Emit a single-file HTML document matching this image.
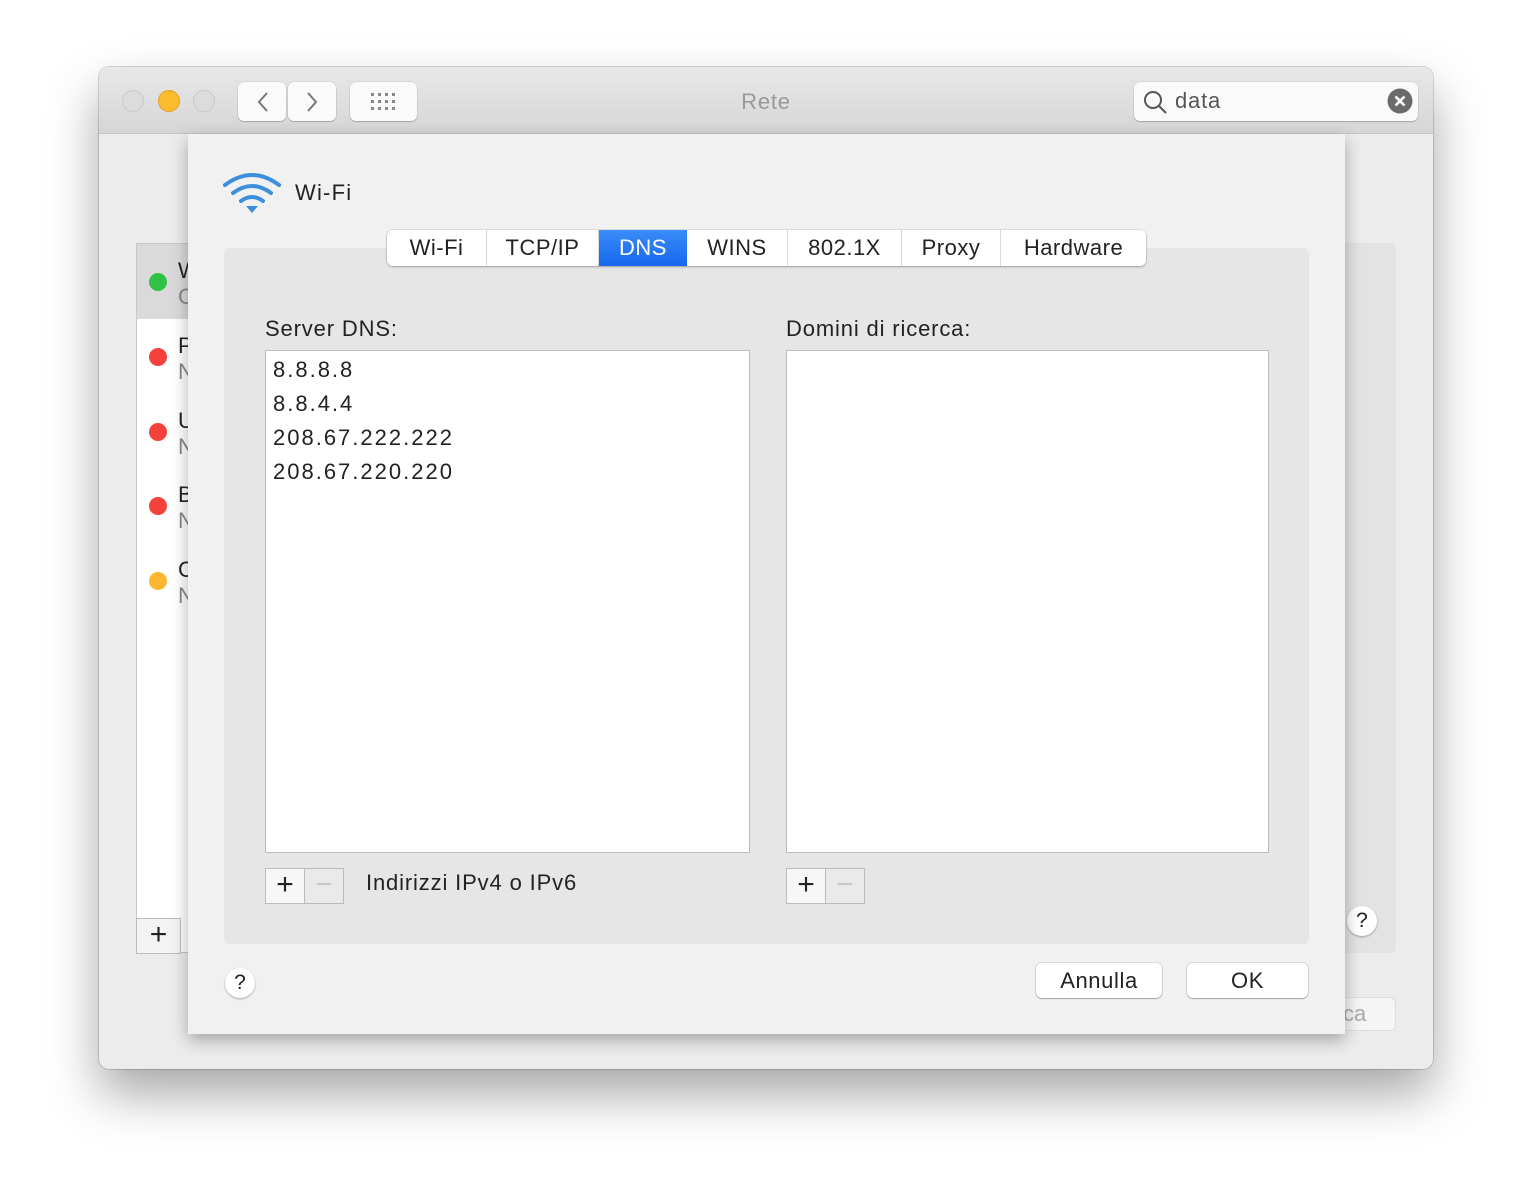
<!DOCTYPE html>
<html><head><meta charset="utf-8"><style>
*{margin:0;padding:0;box-sizing:border-box}
body{width:1532px;height:1200px;background:#fff;position:relative;overflow:hidden;font-family:"Liberation Sans",sans-serif;color:#222}
.a{position:absolute}
.win{left:99px;top:67px;width:1334px;height:1002px;border-radius:10px;background:#ececec;box-shadow:0 25px 50px rgba(0,0,0,.35),0 0 0 1px rgba(0,0,0,.15);overflow:hidden}
.tb{left:0;top:0;width:1334px;height:67px;background:linear-gradient(#e8e8e8,#d6d6d6);border-bottom:1px solid #c4c4c4}
.dot{width:22px;height:22px;border-radius:50%}
.btn{background:#fafafa;border-radius:6px;box-shadow:0 1px 1px rgba(0,0,0,.2),0 0 0 .5px rgba(0,0,0,.1)}
.sheet{left:188px;top:134px;width:1157px;height:900px;background:#f1f1f1;box-shadow:0 6px 16px rgba(0,0,0,.3)}
.box{background:#e6e6e6;border-radius:6px}
.tab{top:230px;height:36px;font-size:22px;line-height:36px;text-align:center;background:#fff;border-right:1px solid #d8d8d8;letter-spacing:.5px}
.list{background:#fff;border:1px solid #bdbdbd}
.lbl{font-size:22px;letter-spacing:.85px}
.pm{width:40px;height:36px;border:1px solid #bcbcbc;font-size:30px;line-height:32px;text-align:center;font-weight:300}
.hb{width:30px;height:30px;border-radius:50%;background:#fff;box-shadow:0 1px 2px rgba(0,0,0,.3);font-size:21px;text-align:center;line-height:30px}
.pb{border-radius:6px;background:#fff;box-shadow:0 1px 1px rgba(0,0,0,.25),0 0 0 1px rgba(0,0,0,.1);font-size:22px;text-align:center;line-height:35px;height:35px;letter-spacing:.6px}
</style></head><body>
<div class="a win">
 <div class="a tb"></div>
</div>
<div class="a dot" style="left:122px;top:90px;background:#dcdcdc;border:1px solid #c8c8c8"></div>
<div class="a dot" style="left:158px;top:90px;background:#fcbc2e;border:1px solid #e0a020"></div>
<div class="a dot" style="left:193px;top:90px;background:#dcdcdc;border:1px solid #c8c8c8"></div>
<div class="a btn" style="left:238px;top:82px;width:48px;height:39px"></div>
<div class="a btn" style="left:288px;top:82px;width:48px;height:39px"></div>
<svg class="a" style="left:238px;top:82px" width="100" height="40"><path d="M29 11 L21 20 L29 29" stroke="#777" stroke-width="2" fill="none"/><path d="M70 11 L78 20 L70 29" stroke="#777" stroke-width="2" fill="none"/></svg>
<div class="a btn" style="left:350px;top:82px;width:67px;height:39px"></div>
<svg class="a" style="left:370px;top:91px" width="28" height="20"><g fill="#888"><rect x="1" y="2" width="3" height="3"/><rect x="8" y="2" width="3" height="3"/><rect x="15" y="2" width="3" height="3"/><rect x="22" y="2" width="3" height="3"/><rect x="1" y="9" width="3" height="3"/><rect x="8" y="9" width="3" height="3"/><rect x="15" y="9" width="3" height="3"/><rect x="22" y="9" width="3" height="3"/><rect x="1" y="16" width="3" height="3"/><rect x="8" y="16" width="3" height="3"/><rect x="15" y="16" width="3" height="3"/><rect x="22" y="16" width="3" height="3"/></g></svg>
<div class="a" style="left:700px;top:89px;width:132px;text-align:center;font-size:22px;color:#999;letter-spacing:.8px">Rete</div>
<div class="a btn" style="left:1134px;top:82px;width:284px;height:39px"></div>
<svg class="a" style="left:1142px;top:89px" width="28" height="28"><circle cx="11" cy="11" r="8" stroke="#555" stroke-width="2" fill="none"/><path d="M17 17 L24 24" stroke="#555" stroke-width="2"/></svg>
<div class="a" style="left:1175px;top:88px;font-size:22px;color:#555;letter-spacing:.8px">data</div>
<svg class="a" style="left:1387px;top:88px" width="26" height="26"><circle cx="13" cy="13" r="12.5" fill="#6b6b6b"/><path d="M8.5 8.5 L17.5 17.5 M17.5 8.5 L8.5 17.5" stroke="#fff" stroke-width="2.6"/></svg>

<div class="a" style="left:136px;top:243px;width:60px;height:710px;background:#fff;border:1px solid #c8c8c8"></div>
<div class="a" style="left:137px;top:244px;width:55px;height:75px;background:#dadada"></div>
<div class="a dot" style="left:149px;top:273px;width:18px;height:18px;background:#2fc247"></div>
<div class="a dot" style="left:149px;top:348px;width:18px;height:18px;background:#f5413c"></div>
<div class="a dot" style="left:149px;top:423px;width:18px;height:18px;background:#f5413c"></div>
<div class="a dot" style="left:149px;top:497px;width:18px;height:18px;background:#f5413c"></div>
<div class="a dot" style="left:149px;top:572px;width:18px;height:18px;background:#fcb62f"></div>
<div class="a" style="left:178px;top:258px;font-size:22px;line-height:26px">W<br><span style="color:#888">C</span></div>
<div class="a" style="left:178px;top:333px;font-size:22px;line-height:26px">P<br><span style="color:#888">N</span></div>
<div class="a" style="left:178px;top:408px;font-size:22px;line-height:26px">U<br><span style="color:#888">N</span></div>
<div class="a" style="left:178px;top:482px;font-size:22px;line-height:26px">B<br><span style="color:#888">N</span></div>
<div class="a" style="left:178px;top:557px;font-size:22px;line-height:26px">C<br><span style="color:#888">N</span></div>
<div class="a pm" style="left:136px;top:918px;width:45px;background:#f4f4f4">+</div>
<div class="a" style="left:1340px;top:243px;width:56px;height:710px;background:#e3e3e3;border-radius:6px"></div>
<div class="a hb" style="left:1347px;top:906px">?</div>
<div class="a" style="left:1320px;top:997px;width:76px;height:34px;background:#f5f5f5;border:1px solid #ddd;border-radius:6px;font-size:22px;color:#aaa;line-height:32px;padding-left:22px">ca</div>

<div class="a sheet"></div>
<svg class="a" style="left:222px;top:170px" width="60" height="46"><g fill="none" stroke="#3c8fdc" stroke-width="4" stroke-linecap="round"><path d="M3 15 Q30 -5 57 15"/><path d="M11 23 Q30 9 49 23"/><path d="M19 31 Q30 23 41 31"/></g><path d="M24 36 L36 36 L30 43 Z" fill="#3c8fdc"/></svg>
<div class="a lbl" style="left:295px;top:180px;letter-spacing:1.2px">Wi-Fi</div>
<div class="a box" style="left:224px;top:248px;width:1085px;height:696px"></div>
<div class="a" style="left:387px;top:230px;width:759px;height:36px;border-radius:6px;box-shadow:0 1px 2px rgba(0,0,0,.25),0 0 0 .5px rgba(0,0,0,.15);overflow:hidden;background:#fff">
 <div class="a tab" style="left:0;top:0;width:100px">Wi-Fi</div>
 <div class="a tab" style="left:100px;top:0;width:112px">TCP/IP</div>
 <div class="a tab" style="left:212px;top:0;width:88px;background:linear-gradient(#3a8cf8,#1768f0);color:#fff;border:none">DNS</div>
 <div class="a tab" style="left:300px;top:0;width:101px">WINS</div>
 <div class="a tab" style="left:401px;top:0;width:114px">802.1X</div>
 <div class="a tab" style="left:515px;top:0;width:99px">Proxy</div>
 <div class="a tab" style="left:614px;top:0;width:145px;border:none">Hardware</div>
</div>
<div class="a lbl" style="left:265px;top:316px">Server DNS:</div>
<div class="a lbl" style="left:786px;top:316px">Domini di ricerca:</div>
<div class="a list" style="left:265px;top:350px;width:485px;height:503px"></div>
<div class="a list" style="left:786px;top:350px;width:483px;height:503px"></div>
<div class="a" style="left:273px;top:353px;font-size:22px;line-height:34px;letter-spacing:2px">8.8.8.8<br>8.8.4.4<br>208.67.222.222<br>208.67.220.220</div>
<div class="a pm" style="left:265px;top:868px;background:#f7f7f7">+</div>
<div class="a pm" style="left:304px;top:868px;background:#eaeaea;color:#c8c8c8">−</div>
<div class="a lbl" style="left:366px;top:870px">Indirizzi IPv4 o IPv6</div>
<div class="a pm" style="left:786px;top:868px;background:#f7f7f7">+</div>
<div class="a pm" style="left:825px;top:868px;background:#eaeaea;color:#c8c8c8">−</div>
<div class="a hb" style="left:225px;top:968px">?</div>
<div class="a pb" style="left:1036px;top:963px;width:126px">Annulla</div>
<div class="a pb" style="left:1187px;top:963px;width:121px">OK</div>
</body></html>
